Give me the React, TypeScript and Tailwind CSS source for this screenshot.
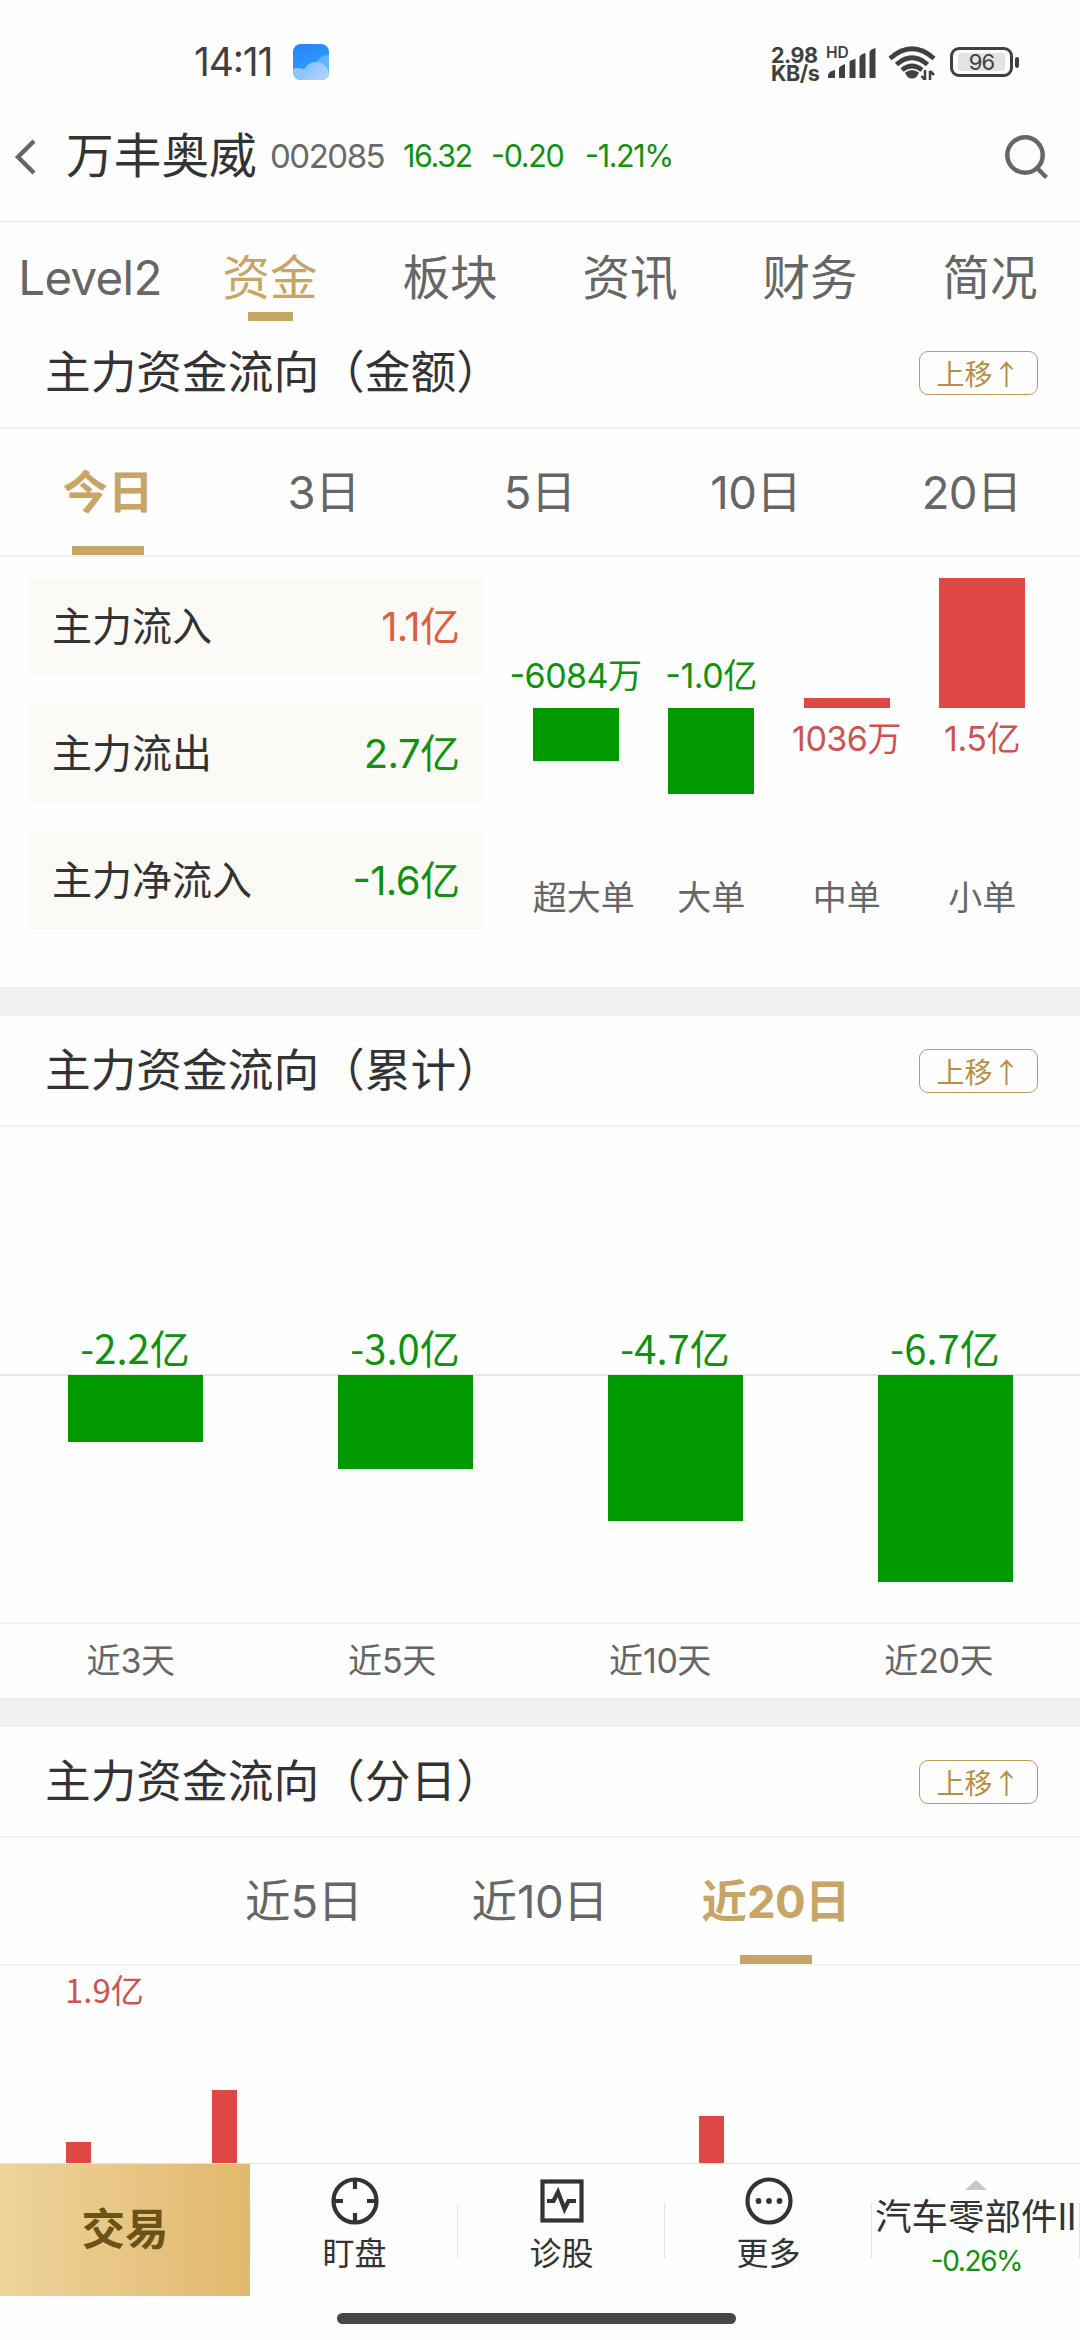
import type { ReactNode } from 'react';

const UP = '#df4744';
const DOWN = '#009900';

const pageTabs = ['Level2', '资金', '板块', '资讯', '财务', '简况'];
const amountTabs = ['今日', '3日', '5日', '10日', '20日'];
const dailyTabs = ['近5日', '近10日', '近20日'];

const summary = [
  { label: '主力流入', value: '1.1亿', color: 'text-[#dc6040]' },
  { label: '主力流出', value: '2.7亿', color: 'text-[#0f920f]' },
  { label: '主力净流入', value: '-1.6亿', color: 'text-[#0f920f]' },
];

// size is the bar height in pixels, negative when money flows out
const orders = [
  { name: '超大单', value: '-6084万', size: -53 },
  { name: '大单', value: '-1.0亿', size: -86 },
  { name: '中单', value: '1036万', size: 10 },
  { name: '小单', value: '1.5亿', size: 130 },
];

const totals = [
  { name: '近3天', value: '-2.2亿', size: 67 },
  { name: '近5天', value: '-3.0亿', size: 94 },
  { name: '近10天', value: '-4.7亿', size: 146 },
  { name: '近20天', value: '-6.7亿', size: 207 },
];

const daily = [21, 0, 0, 73, 0, 0, 0, 0, 0, 0, 0, 0, 0, 47, 0, 0, 0, 0, 0, 0];

// Latin runs are set a little tighter than the Chinese text around them
function Mixed({ children }: { children: string }) {
  return (
    <>
      {children.split(/([\w.%-]+)/).map((part, i) =>
        i % 2 === 1 ? (
          <span key={i} className="tracking-[-0.015em]">
            {part}
          </span>
        ) : (
          part
        ),
      )}
    </>
  );
}

function StatusBar() {
  return (
    <div className="flex h-[90px] items-start pl-[194px] pr-[61px] pt-[44px] text-[#404040]">
      <span className="w-[99px] text-[39px] leading-9 tracking-[-0.03em]">14:11</span>
      <svg width="36" height="36" viewBox="0 0 36 36">
        <defs>
          <linearGradient id="sky" x1="0" y1="0" x2="0.4" y2="1">
            <stop offset="0" stopColor="#2a80fb" />
            <stop offset="1" stopColor="#2aa5fc" />
          </linearGradient>
          <linearGradient id="cloud" x1="0" y1="0" x2="1" y2="1">
            <stop offset="0" stopColor="#7fc0fd" />
            <stop offset="1" stopColor="#c4d6fd" />
          </linearGradient>
          <clipPath id="tile">
            <rect width="36" height="36" rx="8" />
          </clipPath>
        </defs>
        <g clipPath="url(#tile)">
          <rect width="36" height="36" fill="url(#sky)" />
          <circle cx="36" cy="25" r="14" fill="#62b6fb" />
          <circle cx="5" cy="35" r="11" fill="#8cc6fd" />
          <circle cx="23" cy="31" r="13" fill="url(#cloud)" />
        </g>
      </svg>
      <div className="flex-1" />
      <div className="w-[51px] pt-[2px] text-[21.500px] font-bold leading-[18px] tracking-[-0.02em]">
        <div>2.98</div>
        <div>KB/s</div>
      </div>
      <svg width="126" height="36" viewBox="821 44 126 36">
        <text x="825" y="58" fontSize="15.500" fontWeight="600" fill="#404040">
          HD
        </text>
        <g fill="#404040">
          <path d="M827 78v-3q1-4 7-5v8z" />
          <path d="M838 78V68q1-2 6-4v14z" />
          <path d="M848.500 78V62q1-2 6-3v19z" />
          <path d="M858.500 78V57q1-3 6-4v25z" />
          <path d="M868.500 78V52q1-3 6-4v30z" />
          <path d="M904 72.500q7-5 14 0q-2 6-7 6t-7-6z" />
        </g>
        <g fill="none" stroke="#404040" strokeWidth="4.800">
          <path d="M889 58.500Q911 39 933 58.500" />
          <path d="M895.500 64.500Q911 51 926.500 64.500" />
          <path d="M901 70Q911 62 921 70" />
        </g>
        <path d="M924 70v10M924 80l-3.500-4M929 80V71M929 71l4 4" stroke="#404040" strokeWidth="2.500" fill="none" />
      </svg>
      <div className="ml-0.5 mt-[3px] flex h-[30px] items-center">
        <div className="flex h-[30px] w-[63px] items-center justify-center rounded-[9px] border-[3px] border-[#404040]">
          <div className="flex h-[18px] w-[47px] items-center justify-center rounded-[3px] bg-[#e3e3e3] text-[22px] leading-none tracking-[-0.04em]">
            96
          </div>
        </div>
        <div className="ml-0.5 h-[11px] w-1 rounded-sm bg-[#404040]" />
      </div>
    </div>
  );
}

function Header() {
  return (
    <header className="flex h-[132px] items-center border-b border-[#e6e6e6] pl-[14px] pr-[31px] pt-[2px]">
      <svg width="24" height="38" viewBox="0 0 24 38" fill="none" stroke="#666" strokeWidth="4.500">
        <path d="M20 3L4 19l16 16" />
      </svg>
      <h1 className="ml-7 w-[204px] text-[47.700px] leading-none text-[#333]">万丰奥威</h1>
      <span className="w-[133px] text-[33px] leading-none tracking-[-0.045em] text-[#6a6a6a]">002085</span>
      <div className="flex text-[30.500px] leading-none tracking-[-0.045em] text-[#0f920f]">
        <span className="w-[88px]">16.32</span>
        <span className="w-[94px]">-0.20</span>
        <span>-1.21%</span>
      </div>
      <svg width="46" height="46" viewBox="0 0 46 46" fill="none" stroke="#666" strokeWidth="4.500" className="ml-auto">
        <circle cx="22" cy="21" r="17.700" />
        <path d="M34 34l9.500 9.500" />
      </svg>
    </header>
  );
}

function PageTabs() {
  return (
    <nav className="grid h-[96px] grid-cols-6 pt-[30px] text-[47.500px] leading-[52px] text-[#666]">
      {pageTabs.map((tab) => {
        const active = tab === '资金';
        return (
          <div key={tab} className={active ? 'flex flex-col items-center text-[#c8a564]' : 'flex flex-col items-center'}>
            <span className="whitespace-nowrap">
              <Mixed>{tab}</Mixed>
            </span>
            {active && <div className="mt-2 h-[9px] w-[45px] bg-[#c8a564]" />}
          </div>
        );
      })}
    </nav>
  );
}

function Section({ title, children }: { title: string; children: ReactNode }) {
  return (
    <section>
      <div className="flex h-[111px] items-center justify-between border-b-2 border-[#f1f1f1] pl-[45px] pr-[42px]">
        <h2 className="text-[45.700px] leading-none text-[#333]">{title}</h2>
        <button className="flex h-11 w-[119px] items-center justify-center rounded-[9px] border border-[#bd9a55] font-['Noto_Sans_CJK_SC',sans-serif] text-[28px] leading-none text-[#b98e43]">
          上移↑
        </button>
      </div>
      {children}
    </section>
  );
}

function RangeTabs({ tabs, active, inset }: { tabs: string[]; active: string; inset?: boolean }) {
  return (
    <div
      className={
        inset
          ? 'flex h-32 border-b-2 border-[#f1f1f1] px-[186px] text-[45.500px] leading-[50px] text-[#666]'
          : 'flex h-32 border-b-2 border-[#f1f1f1] text-[45.500px] leading-[50px] text-[#666]'
      }
    >
      {tabs.map((tab) => (
        <div key={tab} className="flex flex-1 flex-col items-center justify-between pt-[39px]">
          <span className={tab === active ? 'whitespace-nowrap font-bold text-[#c8a564]' : 'whitespace-nowrap'}>
            <Mixed>{tab}</Mixed>
          </span>
          {tab === active && <div className="h-[9px] w-[72px] bg-[#c8a564]" />}
        </div>
      ))}
    </div>
  );
}

function AmountPanel() {
  return (
    <div className="flex h-[430px] pl-[29px] pt-[21px]">
      <div className="flex w-[454px] flex-col gap-[29px]">
        {summary.map((row) => (
          <div key={row.label} className="flex h-[98px] items-center justify-between bg-[#fbfaf6] px-[23px] text-[40px] leading-none">
            <span className="text-[#333]">{row.label}</span>
            <span className={row.color}>
              <Mixed>{row.value}</Mixed>
            </span>
          </div>
        ))}
      </div>
      <div className="ml-[25px] grid w-[542px] grid-cols-4 text-[34px] leading-[44px]">
        {orders.map((o) => (
          <div key={o.name} className="flex flex-col items-center whitespace-nowrap">
            <div className="flex h-[130px] flex-col items-center justify-end">
              {o.size < 0 ? (
                <span className="mb-[10px] text-[#0f920f]">
                  <Mixed>{o.value}</Mixed>
                </span>
              ) : (
                <div className="w-[86px]" style={{ height: o.size, background: UP }} />
              )}
            </div>
            <div className="flex h-[168px] flex-col items-center">
              {o.size < 0 ? (
                <div className="w-[86px]" style={{ height: -o.size, background: DOWN }} />
              ) : (
                <span className="mt-[9px] text-[#cb5450]">
                  <Mixed>{o.value}</Mixed>
                </span>
              )}
            </div>
            <span className={o.name.length > 2 ? 'pl-4 text-[#666]' : 'text-[#666]'}>{o.name}</span>
          </div>
        ))}
      </div>
    </div>
  );
}

function TotalsPanel() {
  return (
    <div className="h-[571px] pt-[197px] font-['Noto_Sans_CJK_SC',sans-serif]">
      <div className="grid h-[52px] grid-cols-4 border-b-2 border-[#e6e6e6] text-center text-[40px] leading-[46px] text-[#0f920f]">
        {totals.map((t) => (
          <span key={t.name}>{t.value}</span>
        ))}
      </div>
      <div className="-mt-px grid h-[249px] grid-cols-4 justify-items-center border-b-2 border-[#f1f1f1]">
        {totals.map((t) => (
          <div key={t.name} className="w-[135px]" style={{ height: t.size, background: DOWN }} />
        ))}
      </div>
      <div className="flex justify-around pt-[15px] font-[Inter,'Noto_Sans_CJK_SC',sans-serif] text-[34px] leading-[44px] text-[#666]">
        {totals.map((t) => (
          <span key={t.name}>
            <Mixed>{t.name}</Mixed>
          </span>
        ))}
      </div>
    </div>
  );
}

function DailyPanel() {
  return (
    <div className="flex h-[197px] flex-col justify-between pl-[54px] pr-[52px]">
      <span className="pl-[11px] pt-px font-['Noto_Sans_CJK_SC',sans-serif] text-[33px] leading-[44px] text-[#cb5450]">1.9亿</span>
      <div className="flex items-end">
        {daily.map((size, i) => (
          <div key={i} className="flex flex-1 justify-center">
            <div className="w-[25px]" style={{ height: size, background: UP }} />
          </div>
        ))}
      </div>
    </div>
  );
}

function ActionItem({ label, children }: { label: string; children: ReactNode }) {
  return (
    <div className="flex h-[132px] w-[207px] items-center">
      <div className="flex flex-1 flex-col items-center pb-[10px] pl-px text-[32px] leading-10 text-[#333]">
        <svg width="48" height="48" viewBox="0 0 48 48" fill="none" stroke="#333" strokeWidth="4.200">
          {children}
        </svg>
        <span className="mt-[9px]">{label}</span>
      </div>
      <div className="h-[55px] w-px bg-[#e3e3e3]" />
    </div>
  );
}

function BottomBar() {
  return (
    <footer className="h-[177px] overflow-hidden border-t border-[#e3e3e3]">
      <div className="flex h-[132px]">
        <button className="flex w-[250px] items-center justify-center bg-linear-to-r from-[#eed39c] to-[#e1b96d] text-[43.500px] font-bold leading-none text-[#6b5217]">
          交易
        </button>
        <div className="my-auto h-[55px] w-px bg-[#eee]" />
        <ActionItem label="盯盘">
          <circle cx="24" cy="24" r="21.500" />
          <path d="M24 3v9M24 36v9M3 24h9M36 24h9" />
        </ActionItem>
        <ActionItem label="诊股">
          <rect x="4.500" y="4.500" width="39" height="39" />
          <path d="M9 24h6.500l4.500-9 6.500 17 4-8H38" />
        </ActionItem>
        <ActionItem label="更多">
          <circle cx="24" cy="24" r="21.500" />
          <g fill="#333" stroke="none">
            <circle cx="13.500" cy="24" r="2.900" />
            <circle cx="24" cy="24" r="2.900" />
            <circle cx="34.500" cy="24" r="2.900" />
          </g>
        </ActionItem>
        <div className="flex w-[207px] flex-col items-center pt-4">
          <svg width="22" height="10" viewBox="0 0 22 10">
            <path d="M11 0l11 10H0z" fill="#c9c9c9" />
          </svg>
          <span className="mt-[6px] whitespace-nowrap text-[36.500px] leading-[42px] text-[#333]">
            <Mixed>汽车零部件II</Mixed>
          </span>
          <span className="mt-[6px] pl-0.5 text-[28px] leading-[34px] tracking-[-0.05em] text-[#0f920f]">-0.26%</span>
        </div>
        <div className="my-auto h-[55px] w-px bg-[#e3e3e3]" />
      </div>
      <div className="ml-[337px] mt-[17px] h-[11px] w-[399px] rounded-full bg-[#464646]" />
    </footer>
  );
}

export default function App() {
  return (
    <div className="flex h-[2340px] w-[1080px] flex-col overflow-hidden bg-[#fefefe] font-[Inter,'Noto_Sans_CJK_SC',sans-serif] [font-feature-settings:'case']">
      <StatusBar />
      <Header />
      <PageTabs />
      <Section title="主力资金流向（金额）">
        <RangeTabs tabs={amountTabs} active="今日" />
        <AmountPanel />
      </Section>
      <div className="h-[29px] shrink-0 bg-[#f0f0f3]" />
      <Section title="主力资金流向（累计）">
        <TotalsPanel />
      </Section>
      <div className="h-[29px] shrink-0 bg-[#f0f0f3]" />
      <Section title="主力资金流向（分日）">
        <RangeTabs tabs={dailyTabs} active="近20日" inset />
        <DailyPanel />
      </Section>
      <BottomBar />
    </div>
  );
}
